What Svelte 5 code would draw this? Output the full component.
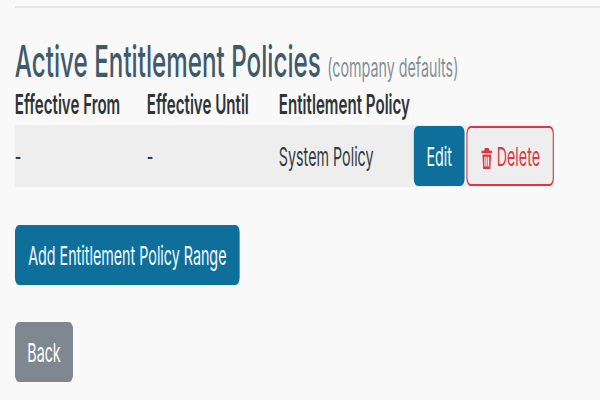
<script lang="ts">
  const columns = ["Effective From", "Effective Until", "Entitlement Policy"];
  const rows = [{ from: "-", until: "-", policy: "System Policy" }];
</script>

<!-- the whole page is drawn wider and squeezed, the reference is a squeezed capture -->
<div class="page">
  <hr />
  <h2>Active Entitlement Policies <small>(company defaults)</small></h2>

  <table>
    <thead>
      <tr>
        {#each columns as col}
          <th>{col}</th>
        {/each}
        <th class="rest"></th>
      </tr>
    </thead>
    <tbody>
      {#each rows as row}
        <tr>
          <td>{row.from}</td>
          <td>{row.until}</td>
          <td>{row.policy}</td>
          <td class="actions">
            <button class="btn primary edit">Edit</button>
            <button class="btn danger">
              <svg viewBox="0 0 24 24" width="22" height="21" aria-hidden="true">
                <path fill="currentColor" d="M8 0h8l1.500 3H23v3H1V3h5.500zM3 7.500h18L19.500 24h-15zM7 10v11h2.500V10zm3.800 0v11h2.400V10zm3.700 0v11H17V10z" fill-rule="evenodd" />
              </svg>
              Delete
            </button>
          </td>
        </tr>
      {/each}
    </tbody>
  </table>

  <div class="stack">
    <button class="btn primary wide">Add Entitlement Policy Range</button>
    <button class="btn secondary">Back</button>
  </div>
</div>

<style>
  :global(body) {
    margin: 0;
    background: #f9f9fa;
    overflow: hidden;
  }

  .page {
    box-sizing: border-box;
    width: 1091px;
    height: 400px;
    padding: 6px 0 0 27px;
    transform: scaleX(0.55);
    transform-origin: 0 0;
    font-family: Inter, sans-serif;
    color: #343a40;
  }

  hr {
    margin: 0;
    border: none;
    border-top: 2px solid #e4e5e6;
  }

  h2 {
    margin: 28px 0 0;
    font-size: 44px;
    line-height: 50px;
    font-weight: 500;
    color: #3f5a6c;
    white-space: nowrap;
  }

  small {
    font-size: 26px;
    line-height: 1;
    font-weight: 400;
    color: #868e96;
  }

  table {
    width: 980px;
    table-layout: fixed;
    border-collapse: collapse;
    font-size: 26px;
  }

  th {
    box-sizing: border-box;
    height: 39px;
    padding: 0 0 4px;
    text-align: left;
    font-size: 27.500px;
    font-weight: 600;
    color: #2f3336;
    width: 240px;
    white-space: nowrap;
  }

  th.rest {
    width: auto;
  }

  td {
    height: 62px;
    padding: 0;
    background: #eeeeee;
    white-space: nowrap;
  }

  .actions {
    padding-left: 5px;
  }

  .btn {
    box-sizing: border-box;
    height: 60px;
    padding: 0;
    border: 2px solid transparent;
    border-radius: 8px;
    font: inherit;
    font-size: 26px;
    vertical-align: middle;
  }

  .primary {
    background: #0f6f9b;
    color: #f4fbff;
  }

  .edit {
    width: 93px;
  }

  .danger {
    margin-left: -4px;
    width: 159px;
    background: transparent;
    border-color: #dc3545;
    color: #dc3545;
  }

  .danger svg {
    vertical-align: -3px;
  }

  .secondary {
    width: 106px;
    background: #7f8790;
    color: #ffffff;
  }

  .stack {
    display: flex;
    flex-direction: column;
    align-items: flex-start;
    gap: 37px;
    margin-top: 38px;
  }

  .wide {
    width: 409px;
  }
</style>
